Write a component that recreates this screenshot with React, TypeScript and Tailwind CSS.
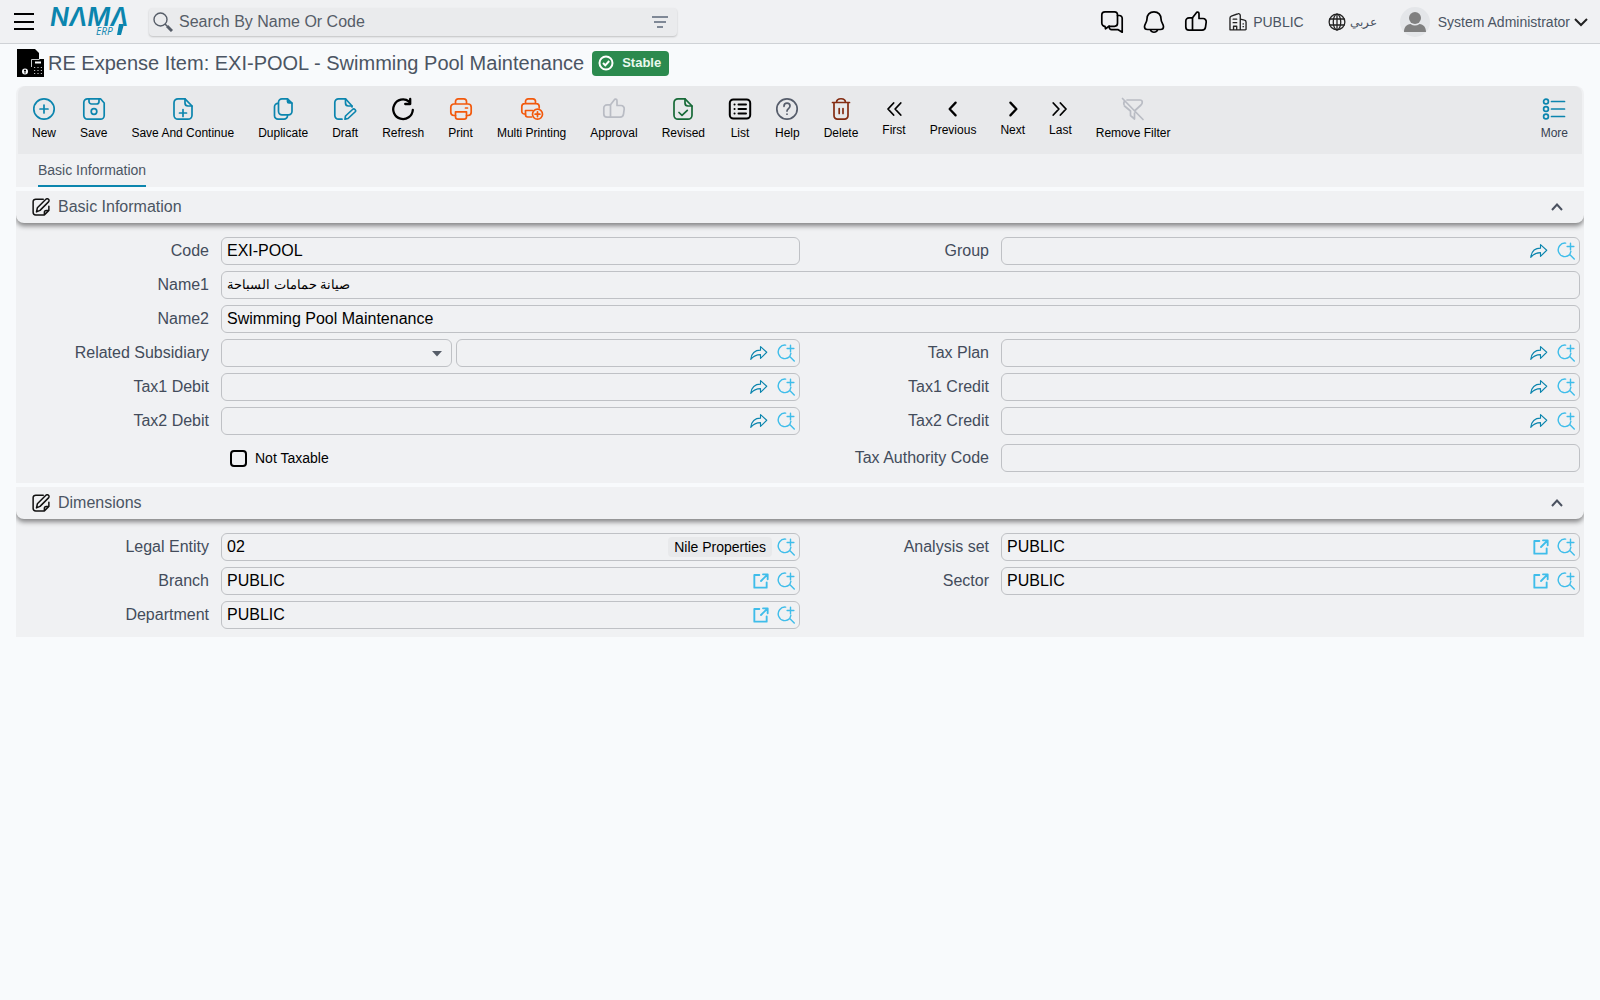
import { ReactNode, useState } from "react";

type IconName =
  | "new"
  | "save"
  | "saveContinue"
  | "duplicate"
  | "draft"
  | "refresh"
  | "print"
  | "multiPrint"
  | "thumb"
  | "revised"
  | "list"
  | "help"
  | "delete"
  | "first"
  | "previous"
  | "next"
  | "last"
  | "removeFilter"
  | "more"
  | "chat"
  | "bell"
  | "building"
  | "globe"
  | "edit"
  | "goto"
  | "lookup"
  | "open";

const drawings: Record<IconName, ReactNode> = {
  new: (
    <>
      <circle cx="12" cy="12" r="10.2" />
      <path d="M12 8v8M8 12h8" />
    </>
  ),
  save: (
    <>
      <path d="M5.5 1.8h13L22.2 6v12.5a3.7 3.7 0 0 1-3.7 3.7h-13a3.7 3.7 0 0 1-3.7-3.7v-13a3.7 3.7 0 0 1 3.7-3.7z" />
      <path d="M7 2v2.5A2.5 2.5 0 0 0 9.5 7h5A2.5 2.5 0 0 0 17 4.5V2" />
      <circle cx="12" cy="14.5" r="2.8" />
    </>
  ),
  saveContinue: (
    <>
      <path d="M14 1.8H7a4 4 0 0 0-4 4v12.4a4 4 0 0 0 4 4h10a4 4 0 0 0 4-4V9z" />
      <path d="M14 1.8V6a3 3 0 0 0 3 3h4M12 12.5v7M8.5 16h7" />
    </>
  ),
  duplicate: (
    <>
      <path d="M16.5 1.8H11a3.5 3.5 0 0 0-3.5 3.5v9A3.5 3.5 0 0 0 11 17.8h6.5a3.5 3.5 0 0 0 3.5-3.5V6z" />
      <path d="M16.5 2v2.5A1.5 1.5 0 0 0 18 6h2.8" fill="currentColor" />
      <path d="M7 6.3A3.5 3.5 0 0 0 3.5 9.8v8.9A3.5 3.5 0 0 0 7 22.2h6a3.5 3.5 0 0 0 3.5-3.5" />
    </>
  ),
  draft: (
    <>
      <path d="M9 22.2H5.5a3.7 3.7 0 0 1-3.7-3.7v-13a3.7 3.7 0 0 1 3.7-3.7h7L19 9v1" />
      <path d="M12.5 2v4a3 3 0 0 0 3 3H19" />
      <path d="m12.5 19 7-6.5a1.7 1.7 0 0 1 2.5 2.5l-7 6.5-3 .7z" />
    </>
  ),
  refresh: <path strokeWidth="2.3" d="M21.8 13A9.8 9.8 0 1 1 18 4.5M19.2 2v5h-5" />,
  print: (
    <>
      <path d="M6.5 7V4.5a2.7 2.7 0 0 1 2.7-2.7h5.6a2.7 2.7 0 0 1 2.7 2.7V7M6.5 18.5H5a3.2 3.2 0 0 1-3.2-3.2V10.2A3.2 3.2 0 0 1 5 7h14a3.2 3.2 0 0 1 3.2 3.2v5.1a3.2 3.2 0 0 1-3.2 3.2h-1.5" />
      <path d="M6.5 14.8h11v5a2.4 2.4 0 0 1-2.4 2.4H8.9a2.4 2.4 0 0 1-2.4-2.4zM16.5 11h2" />
    </>
  ),
  multiPrint: (
    <>
      <path d="M5.5 6.5v-2a2.7 2.7 0 0 1 2.7-2.7h4.6a2.7 2.7 0 0 1 2.7 2.7v2M5.5 17H4.4a2.6 2.6 0 0 1-2.6-2.6V9.6A3 3 0 0 1 4.8 6.6h11.4a3 3 0 0 1 3 3V11" />
      <path d="M12.5 13.5h-7v4.3A2.2 2.2 0 0 0 7.7 20h4" />
      <circle cx="17.5" cy="17.2" r="5" />
      <path d="M17.5 14.8v4.8M15.1 17.2h4.8" />
    </>
  ),
  thumb: (
    <>
      <path d="M5 7.8h3.5L12.2 3c.7-1.5 2.8-1.2 2.8.8v4.7h4a3.2 3.2 0 0 1 3.2 3.7l-.7 5a3.5 3.5 0 0 1-3.5 3H5a3.2 3.2 0 0 1-3.2-3.2v-6A3.2 3.2 0 0 1 5 7.8z" />
      <path d="M8.5 8v12" />
    </>
  ),
  revised: (
    <>
      <path d="M14 1.8H7a4 4 0 0 0-4 4v12.4a4 4 0 0 0 4 4h10a4 4 0 0 0 4-4V9z" />
      <path d="M14 1.8V6a3 3 0 0 0 3 3h4M8 15.5l3 2.8 5.3-5" />
    </>
  ),
  list: (
    <>
      <rect x="1.8" y="2.5" width="20.4" height="19" rx="3.5" strokeWidth="2" />
      <path strokeWidth="2" d="M10.5 7.5H18M10.5 12H18M10.5 16.5H18M6.5 7.5h.1M6.5 12h.1M6.5 16.5h.1" />
    </>
  ),
  help: (
    <>
      <circle cx="12" cy="12" r="10.2" />
      <path d="M9 9.3c0-4.2 6-4 6-.2 0 2.5-3 2.5-3 5M12 17v.2" />
    </>
  ),
  delete: (
    <>
      <path d="M3.5 5.5h17M7.5 5.5c0-5 9-5 9 0M5 5.5v13a3.5 3.5 0 0 0 3.5 3.7h7a3.5 3.5 0 0 0 3.5-3.7v-13" />
      <path d="M10.2 11.5v5M14 11.5v5" />
    </>
  ),
  first: <path strokeWidth="2.4" d="M11.5 4 4 12l7.5 8M21 4l-7.500 8 7.500 8" />,
  previous: <path strokeWidth="3" d="m15.5 3.5-8 8.5 8 8.5" />,
  next: <path strokeWidth="3" d="m8.5 3.5 8 8.5-8 8.5" />,
  last: <path strokeWidth="2.4" d="m3 4 7.500 8L3 20M12.500 4l7.500 8-7.500 8" />,
  removeFilter: (
    <>
      <path d="M1.5 1.5 22 22.5M6 3h13c3 0 2.7 3.3 1 5l-6 5.5M3.5 9l6 5v4.5l4 3.5v-6" />
      <path d="M3 7.5C2.5 6.5 3 5 3.5 4" />
    </>
  ),
  more: (
    <>
      <circle cx="4" cy="4.5" r="2.4" />
      <circle cx="4" cy="12" r="2.4" />
      <circle cx="4" cy="19.5" r="2.4" />
      <path d="M9.5 4.5h13M9.5 12h13M9.5 19.5h13" />
    </>
  ),
  chat: (
    <>
      <path d="M5 1.8h9.5a3 3 0 0 1 3 3v8.5a3 3 0 0 1-3 3H9l-3.5 2.5-.5-2.5a3.2 3.2 0 0 1-3.2-3.2V5A3.2 3.2 0 0 1 5 1.8z" />
      <path d="M17.5 5.5h2a2.7 2.7 0 0 1 2.7 2.7v14l-4-2.5h-6.5a2.7 2.7 0 0 1-2.5-2.5v-1" />
    </>
  ),
  bell: (
    <>
      <path d="M12 1.8c-4.500 0-7 3.200-7 7 0 4-2.500 5-2.500 8 0 1.800 1.200 2.700 3 2.700h13c1.800 0 3-.9 3-2.700 0-3-2.500-4-2.500-8 0-3.800-2.500-7-7-7z" />
      <path d="M8.5 20c1.2 3 5.8 3 7 0" />
    </>
  ),
  building: (
    <>
      <path d="M2.5 22.5H22a.8.8 0 0 0 .8-.8v-9a2.5 2.5 0 0 0-2-2.4L15.5 9v13M2.5 22.5v-15a2.5 2.5 0 0 1 1.7-2.4l8.3-2.9a2.2 2.2 0 0 1 3 2.1V10" />
      <path d="M6.5 9H11M6.5 13.5H11M7 22v-4h4v4M19 15h.5M19 18.5h.5" />
    </>
  ),
  globe: (
    <>
      <circle cx="12" cy="12" r="10.5" />
      <ellipse cx="12" cy="12" rx="5" ry="10.5" />
      <path d="M2.5 8h19M2.5 16h19M12 1.5v21" />
    </>
  ),
  edit: (
    <g strokeWidth="2">
      <path d="M15 1.5H5A3.5 3.5 0 0 0 1.5 5v14A3.5 3.5 0 0 0 5 22.5h11.500l6-6V11M22.500 16.500H19a2.500 2.500 0 0 0-2.500 2.500v3.500" />
      <path d="M6 18.5 7.2 13 18.5 1.7a2.4 2.4 0 0 1 3.5 3.5L10.7 16.5z" />
    </g>
  ),
  goto: <path strokeWidth="1.5" d="M14 3.5v4.7C7 8.2 2 12.5 1 20.5c4-5 8-6.3 13-6.3v5L22.3 11z" />,
  lookup: (
    <path strokeWidth="1.9" d="M11.5 1.5A9 9 0 1 0 17 16.8M18 1.5v9M13.5 6h9M18.500 12.500l-1.500 4.300 6 6" />
  ),
  open: <path strokeWidth="2.8" d="M9.5 3H2v19h18.5V14M15 2h7v7.5M21.5 2.5 12 12" />,
};

function Icon({ name, className }: { name: IconName; className?: string }) {
  return (
    <svg
      viewBox="0 0 24 24"
      fill="none"
      stroke="currentColor"
      strokeWidth="1.7"
      strokeLinecap="round"
      strokeLinejoin="round"
      aria-hidden="true"
      className={className}
    >
      {drawings[name]}
    </svg>
  );
}

const actions: { icon: IconName; label: string; color: string; small?: boolean }[] = [
  { icon: "new", label: "New", color: "text-[#0b85ae]" },
  { icon: "save", label: "Save", color: "text-[#0b85ae]" },
  { icon: "saveContinue", label: "Save And Continue", color: "text-[#0b85ae]" },
  { icon: "duplicate", label: "Duplicate", color: "text-[#0b85ae]" },
  { icon: "draft", label: "Draft", color: "text-[#0b85ae]" },
  { icon: "refresh", label: "Refresh", color: "text-black" },
  { icon: "print", label: "Print", color: "text-[#f2590c]" },
  { icon: "multiPrint", label: "Multi Printing", color: "text-[#f2590c]" },
  { icon: "thumb", label: "Approval", color: "text-[#b9bcc4]" },
  { icon: "revised", label: "Revised", color: "text-[#176a38]" },
  { icon: "list", label: "List", color: "text-black" },
  { icon: "help", label: "Help", color: "text-[#565d6b]" },
  { icon: "delete", label: "Delete", color: "text-[#842c12]" },
  { icon: "first", label: "First", color: "text-black", small: true },
  { icon: "previous", label: "Previous", color: "text-black", small: true },
  { icon: "next", label: "Next", color: "text-black", small: true },
  { icon: "last", label: "Last", color: "text-black", small: true },
  { icon: "removeFilter", label: "Remove Filter", color: "text-[#b9bcc4]" },
];

function Logo() {
  return (
    <svg viewBox="0 0 84 42" className="h-[42px] w-[84px]" role="img" aria-label="NAMA ERP">
      <g fill="#0b85ae" fontStyle="italic">
        <text x="0" y="25" fontSize="25" fontWeight="600" fontFamily="Inter, sans-serif">
          NΛMΛ
        </text>
        <text x="46" y="34" fontSize="10" fontFamily="'Open Sans', sans-serif">
          ERP
        </text>
      </g>
      <path d="M69 23h5l-3 11h-4z" fill="#0b85ae" />
    </svg>
  );
}

function Header() {
  return (
    <header className="flex h-11 items-center border-b border-[#cfd2d6] bg-[#f0f1f3] pr-3 pl-[14px]">
      <button aria-label="Menu" className="flex h-[17px] w-5 flex-col justify-between">
        <span className="h-0.5 w-full bg-black" />
        <span className="h-0.5 w-full bg-black" />
        <span className="h-0.5 w-full bg-black" />
      </button>
      <a href="#" className="ml-4">
        <Logo />
      </a>
      <div className="ml-[15px] flex h-7 w-[528px] items-center rounded bg-[#eaebed] px-1 shadow-[0_1px_2px_rgba(0,0,0,0.2)]">
        <svg viewBox="0 0 20 20" fill="none" stroke="#565d68" className="size-5" aria-hidden="true">
          <circle cx="7.5" cy="7.5" r="6.5" strokeWidth="1.4" />
          <path d="m12 12 2 2" strokeWidth="1.6" />
          <path d="m14 14 5 5" strokeWidth="3" />
        </svg>
        <input
          type="text"
          aria-label="Search"
          placeholder="Search By Name Or Code"
          className="ml-1.5 min-w-0 flex-1 text-base outline-none placeholder:text-[#565d68]"
        />
        <button aria-label="Filter" className="mr-1">
          <svg viewBox="0 0 18 14" stroke="#7f8896" strokeWidth="2" className="h-[14px] w-[18px]">
            <path d="M1 2h16M3 7h12M6 12h6" />
          </svg>
        </button>
      </div>

      <div className="ml-auto flex items-center text-sm text-[#4b5563]">
        <div className="flex gap-[18px] text-black">
          <button aria-label="Messages">
            <Icon name="chat" className="size-6" />
          </button>
          <button aria-label="Notifications">
            <Icon name="bell" className="size-6" />
          </button>
          <button aria-label="Approvals">
            <Icon name="thumb" className="size-6" />
          </button>
        </div>
        <button className="ml-5 flex items-center gap-1.5">
          <Icon name="building" className="size-[19px] text-[#222]" />
          PUBLIC
        </button>
        <button className="ml-6 flex items-center gap-1">
          <Icon name="globe" className="size-[18px] text-[#222]" />
          <span lang="ar" dir="rtl" className="text-xs">
            عربي
          </span>
        </button>
        <button className="ml-[23px] flex items-center">
          <svg viewBox="0 0 30 30" className="size-[30px]" aria-hidden="true">
            <circle cx="15" cy="15" r="15" fill="#e4e6e9" />
            <circle cx="15" cy="11" r="6" fill="#808080" />
            <path d="M4 25c0-5 2.5-7.5 6.5-8 3 2 6 2 9 0 4 .5 6.5 3 6.5 8z" fill="#808080" />
          </svg>
          <span className="mr-1 ml-2">System Administrator</span>
          <svg viewBox="0 0 14 14" fill="none" stroke="#222" strokeWidth="2" className="size-[14px]" aria-hidden="true">
            <path d="m1 4 6 6 6-6" />
          </svg>
        </button>
      </div>
    </header>
  );
}

function TitleBar() {
  return (
    <div className="flex h-[42px] items-center px-[17px] pb-1">
      <svg viewBox="0 0 27 28" className="h-7 w-[27px]" aria-hidden="true">
        <path d="M0 0h18l4 4v6h5v18H0z" />
        <path d="M14.5 18v-7.5h8" fill="none" stroke="#f8fafc" strokeWidth="0.8" />
        <path d="M18 12.5h6v2h-6z" fill="#f8fafc" />
        <path d="M17 18.500h8M17 21.500h8M17 24.500h8" stroke="#bbb" strokeWidth="1.2" strokeDasharray="1.2 2.2" />
        <circle cx="8" cy="22.5" r="3" fill="#f8fafc" />
        <path d="M8 20.5v4M7 21.5h2" stroke="#000" />
      </svg>
      <h1 className="ml-1 text-xl text-[#4b5563]">RE Expense Item: EXI-POOL - Swimming Pool Maintenance</h1>
      <span className="ml-2 flex h-[25px] items-center gap-2 rounded bg-[#2b8a4e] pr-2 pl-1.5 text-[13px] font-bold text-[#e9f8ee]">
        <svg viewBox="0 0 16 16" fill="none" stroke="white" strokeWidth="2" className="size-4" aria-hidden="true">
          <circle cx="8" cy="8" r="6.5" />
          <path d="m5 8 2.3 2.3L11.2 6" />
        </svg>
        Stable
      </span>
    </div>
  );
}

function Toolbar() {
  return (
    <div className="mx-0.5 flex h-[68px] items-center gap-6 rounded-t-lg bg-[#e8e9eb] px-[14px] pt-0.5 text-xs text-black">
      {actions.map((action) => (
        <button key={action.label} className="flex flex-col items-center">
          <Icon name={action.icon} className={`${action.small ? "size-[18px]" : "-mx-px size-6"} ${action.color}`} />
          <span className="leading-6">{action.label}</span>
        </button>
      ))}
      <button className="ml-auto flex flex-col items-center text-[#374151]">
        <Icon name="more" className="size-6 text-[#0b85ae]" />
        <span className="leading-6">More</span>
      </button>
    </div>
  );
}

function Section({ title, children }: { title: string; children: ReactNode }) {
  const [open, setOpen] = useState(true);

  return (
    <section className="mt-1 bg-[#f0f1f3]">
      <div className="flex h-8 items-center rounded-b-lg px-4 shadow-[0_3px_5px_rgba(0,0,0,0.45)] [clip-path:inset(0_0_-10px_0)]">
        <Icon name="edit" className="size-[18px] text-[#111]" />
        <h2 className="ml-2 text-base text-[#4b5563]">{title}</h2>
        <button aria-label={`Toggle ${title}`} onClick={() => setOpen(!open)} className="mr-1 ml-auto">
          <svg viewBox="0 0 14 14" fill="none" stroke="#4b5260" strokeWidth="2" className="size-[14px]">
            <path d="m2 10 5-5.5 5 5.5" />
          </svg>
        </button>
      </div>
      {open && <div className="grid grid-cols-2 gap-y-1.5 px-1 pt-[14px] pb-2">{children}</div>}
    </section>
  );
}

type FieldProps = {
  id: string;
  label: string;
  value?: string;
  wide?: boolean;
  arabic?: boolean;
  action?: "goto" | "open";
  lookup?: boolean;
  chip?: string;
  before?: ReactNode;
};

function Field({ id, label, value = "", wide, arabic, action, lookup, chip, before }: FieldProps) {
  const [text, setText] = useState<string>(value);

  return (
    <div className={`flex items-center gap-1 ${wide ? "col-span-2" : ""}`}>
      <label htmlFor={id} className="w-[197px] shrink-0 pr-2 text-right text-base text-[#434c5b]">
        {label}
      </label>
      {before}
      <div className="flex h-7 min-w-0 flex-1 items-center gap-[5px] rounded-md border border-[#bfc1c5] pr-1 pl-[5px]">
        <input
          id={id}
          type="text"
          value={text}
          onChange={(e) => setText(e.target.value)}
          className={`min-w-0 flex-1 text-black outline-none ${arabic ? "text-[13px]" : "text-base"}`}
        />
        {chip && <span className="rounded bg-[#e8e9eb] px-1.5 text-sm text-black">{chip}</span>}
        {action && (
          <button aria-label={`Open ${label}`} className={action === "goto" ? "mr-1" : "mr-[3px]"}>
            <Icon name={action} className={action === "goto" ? "size-[18px] text-[#0b85ae]" : "size-4 text-[#3fbdea]"} />
          </button>
        )}
        {lookup && (
          <button aria-label={`Find ${label}`}>
            <Icon name="lookup" className="size-[18px] text-[#3fbdea]" />
          </button>
        )}
      </div>
    </div>
  );
}

function SubsidiaryType() {
  return (
    <div className="relative w-[231px] shrink-0">
      <select
        aria-label="Related Subsidiary Type"
        className="block h-7 w-full appearance-none rounded-md border border-[#bfc1c5] px-[5px] text-base text-black outline-none"
      >
        <option></option>
      </select>
      <svg viewBox="0 0 10 6" className="pointer-events-none absolute top-3 right-2.5 h-1.5 w-2.5" aria-hidden="true">
        <path d="M0 0h10L5 5.5z" fill="#565d68" />
      </svg>
    </div>
  );
}

export default function App() {
  const [notTaxable, setNotTaxable] = useState<boolean>(false);

  return (
    <div className="min-h-screen bg-[#f8fafc] font-['Liberation_Sans',Arial,sans-serif]">
      <Header />
      <TitleBar />
      <main className="mx-4">
        <div className="rounded-t-lg bg-[#f0f1f3]">
          <Toolbar />
          <nav className="flex h-[33px] px-[22px] text-sm">
            <a href="#" className="border-b-2 border-[#0b85ae] pt-1.5 text-[#4b5563]">
              Basic Information
            </a>
          </nav>
        </div>

        <Section title="Basic Information">
          <Field id="code" label="Code" value="EXI-POOL" />
          <Field id="group" label="Group" action="goto" lookup />
          <Field id="name1" label="Name1" value="صيانة حمامات السباحة" wide arabic />
          <Field id="name2" label="Name2" value="Swimming Pool Maintenance" wide />
          <Field id="subsidiary" label="Related Subsidiary" action="goto" lookup before={<SubsidiaryType />} />
          <Field id="taxPlan" label="Tax Plan" action="goto" lookup />
          <Field id="tax1Debit" label="Tax1 Debit" action="goto" lookup />
          <Field id="tax1Credit" label="Tax1 Credit" action="goto" lookup />
          <Field id="tax2Debit" label="Tax2 Debit" action="goto" lookup />
          <Field id="tax2Credit" label="Tax2 Credit" action="goto" lookup />
          <label className="flex h-[34px] items-center gap-2 pl-[210px] text-sm text-black">
            <input
              type="checkbox"
              checked={notTaxable}
              onChange={(e) => setNotTaxable(e.target.checked)}
              className="size-[17px] appearance-none rounded border-2 border-black checked:bg-black"
            />
            Not Taxable
          </label>
          <Field id="taxAuthority" label="Tax Authority Code" />
        </Section>

        <Section title="Dimensions">
          <Field id="legalEntity" label="Legal Entity" value="02" chip="Nile Properties" lookup />
          <Field id="analysisSet" label="Analysis set" value="PUBLIC" action="open" lookup />
          <Field id="branch" label="Branch" value="PUBLIC" action="open" lookup />
          <Field id="sector" label="Sector" value="PUBLIC" action="open" lookup />
          <Field id="department" label="Department" value="PUBLIC" action="open" lookup />
        </Section>
      </main>
    </div>
  );
}
